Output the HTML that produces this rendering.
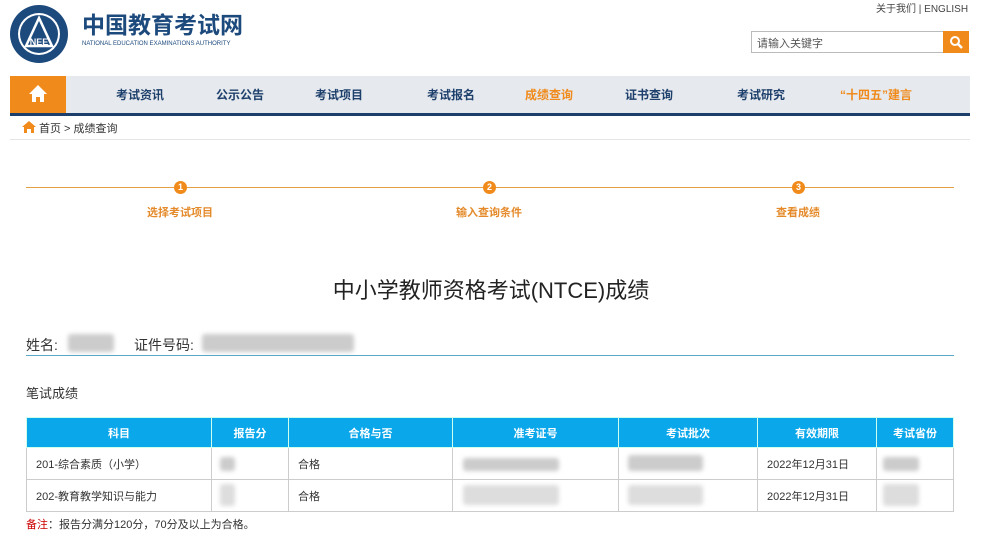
<!DOCTYPE html>
<html><head><meta charset="utf-8"><style>
*{margin:0;padding:0;box-sizing:border-box}
body{width:982px;height:535px;background:#fff;font-family:"Liberation Sans","Noto Sans CJK SC",sans-serif;position:relative;overflow:hidden;color:#333}
.a{position:absolute}
.nav span{position:absolute;top:86px;font-size:12px;font-weight:bold;color:#1d3f6b;transform:translateX(-50%);white-space:nowrap}
.blur{position:absolute;background:#ccc;filter:blur(2px);border-radius:3px}
table{position:absolute;left:26px;top:417px;border-collapse:collapse;font-size:11px}
th{background:#0aa7ea;color:#fff;height:30px;font-weight:bold;border:1px solid #cfe;font-size:11px}
td{height:32px;border:1px solid #ccc;padding-left:9px;color:#333}
</style></head><body>
<svg class="a" style="left:9px;top:4px" width="60" height="60" viewBox="0 0 60 60"><circle cx="30" cy="30" r="29" fill="#1d4a7d"/><circle cx="30" cy="30" r="21" fill="#fff"/><circle cx="30" cy="30" r="19" fill="#1d4a7d"/><path d="M30 14 L17 42 L43 42 Z" fill="none" stroke="#fff" stroke-width="2.5"/><text x="30" y="41" font-size="9" fill="#fff" text-anchor="middle" font-family="Liberation Sans" font-weight="bold">NEE</text></svg>
<div class="a" style="left:82px;top:12px;font-size:23px;font-weight:bold;color:#1d4a7d;line-height:26px">中国教育考试网</div>
<div class="a" style="left:82px;top:41px;font-size:6px;color:#1d4a7d">NATIONAL EDUCATION EXAMINATIONS AUTHORITY</div>
<div class="a" style="left:876px;top:0px;font-size:10px;color:#444">关于我们 | ENGLISH</div>
<div class="a" style="left:751px;top:31px;width:193px;height:22px;border:1px solid #bbb;font-size:11px;color:#555;padding:3px 5px">请输入关键字</div>
<div class="a" style="left:943px;top:31px;width:26px;height:22px;background:#f08a1a"><svg width="26" height="22"><circle cx="12" cy="10" r="4" fill="none" stroke="#fff" stroke-width="2"/><path d="M15 13l4 4" stroke="#fff" stroke-width="2.5"/></svg></div>
<div class="a" style="left:10px;top:76px;width:960px;height:37px;background:#e6e9ee"></div>
<div class="a" style="left:10px;top:113px;width:960px;height:3px;background:#1d3f6b"></div>
<div class="a" style="left:10px;top:76px;width:56px;height:37px;background:#f08a1a"><svg width="56" height="37"><path d="M28 9 L19 18 H22 V26 H26 V21 H30 V26 H34 V18 H37 Z" fill="#fff"/></svg></div>
<div class="nav"><span style="left:140px">考试资讯</span><span style="left:240px">公示公告</span><span style="left:339px">考试项目</span><span style="left:451px">考试报名</span><span style="left:549px;color:#f08a1a">成绩查询</span><span style="left:649px">证书查询</span><span style="left:761px">考试研究</span><span style="left:876px;color:#f08a1a">“十四五”建言</span></div>
<svg class="a" style="left:22px;top:121px" width="14" height="12"><path d="M7 0L0 6H2V12H5V8H9V12H12V6H14Z" fill="#f08a1a"/></svg>
<div class="a" style="left:39px;top:120px;font-size:11px;color:#333">首页 &gt; 成绩查询</div>
<div class="a" style="left:10px;top:139px;width:960px;height:1px;background:#e5e5e5"></div>
<div class="a" style="left:26px;top:187px;width:928px;height:1px;background:#e3a045"></div>
<div class="a" style="left:174px;top:181px;width:13px;height:13px;border-radius:50%;background:#f08a1a;color:#fff;font-size:9px;text-align:center;line-height:13px;font-weight:bold">1</div>
<div class="a" style="left:483px;top:181px;width:13px;height:13px;border-radius:50%;background:#f08a1a;color:#fff;font-size:9px;text-align:center;line-height:13px;font-weight:bold">2</div>
<div class="a" style="left:792px;top:181px;width:13px;height:13px;border-radius:50%;background:#f08a1a;color:#fff;font-size:9px;text-align:center;line-height:13px;font-weight:bold">3</div>
<div class="a" style="left:147px;top:204px;font-size:11px;color:#e48a2a;font-weight:bold">选择考试项目</div>
<div class="a" style="left:456px;top:204px;font-size:11px;color:#e48a2a;font-weight:bold">输入查询条件</div>
<div class="a" style="left:776px;top:204px;font-size:11px;color:#e48a2a;font-weight:bold">查看成绩</div>
<div class="a" style="left:0;width:982px;top:273px;text-align:center;font-size:22px;color:#222">中小学教师资格考试(NTCE)成绩</div>
<div class="a" style="left:26px;top:335px;font-size:14px;color:#333">姓名:</div>
<div class="blur" style="left:68px;top:334px;width:46px;height:18px"></div>
<div class="a" style="left:134px;top:335px;font-size:14px;color:#333">证件号码:</div>
<div class="blur" style="left:202px;top:334px;width:152px;height:18px"></div>
<div class="a" style="left:26px;top:355px;width:928px;height:1px;background:#5aa8c8"></div>
<div class="a" style="left:26px;top:383px;font-size:13px;color:#333">笔试成绩</div>
<table>
<tr><th style="width:185px">科目</th><th style="width:77px">报告分</th><th style="width:164px">合格与否</th><th style="width:166px">准考证号</th><th style="width:139px">考试批次</th><th style="width:119px">有效期限</th><th style="width:77px">考试省份</th></tr>
<tr><td>201-综合素质（小学）</td><td></td><td>合格</td><td></td><td></td><td>2022年12月31日</td><td></td></tr>
<tr><td>202-教育教学知识与能力</td><td></td><td>合格</td><td></td><td></td><td>2022年12月31日</td><td></td></tr>
</table>
<div class="blur" style="left:220px;top:457px;width:15px;height:14px"></div>
<div class="blur" style="left:220px;top:484px;width:15px;height:22px;background:#ddd"></div>
<div class="blur" style="left:463px;top:458px;width:96px;height:13px"></div>
<div class="blur" style="left:463px;top:485px;width:96px;height:20px;background:#ddd"></div>
<div class="blur" style="left:628px;top:455px;width:75px;height:16px"></div>
<div class="blur" style="left:628px;top:485px;width:75px;height:20px;background:#ddd"></div>
<div class="blur" style="left:883px;top:457px;width:36px;height:14px"></div>
<div class="blur" style="left:883px;top:484px;width:36px;height:22px;background:#ddd"></div>
<div class="a" style="left:26px;top:516px;font-size:11px;color:#333"><span style="color:#c00">备注</span>：报告分满分120分，70分及以上为合格。</div>
</body></html>
